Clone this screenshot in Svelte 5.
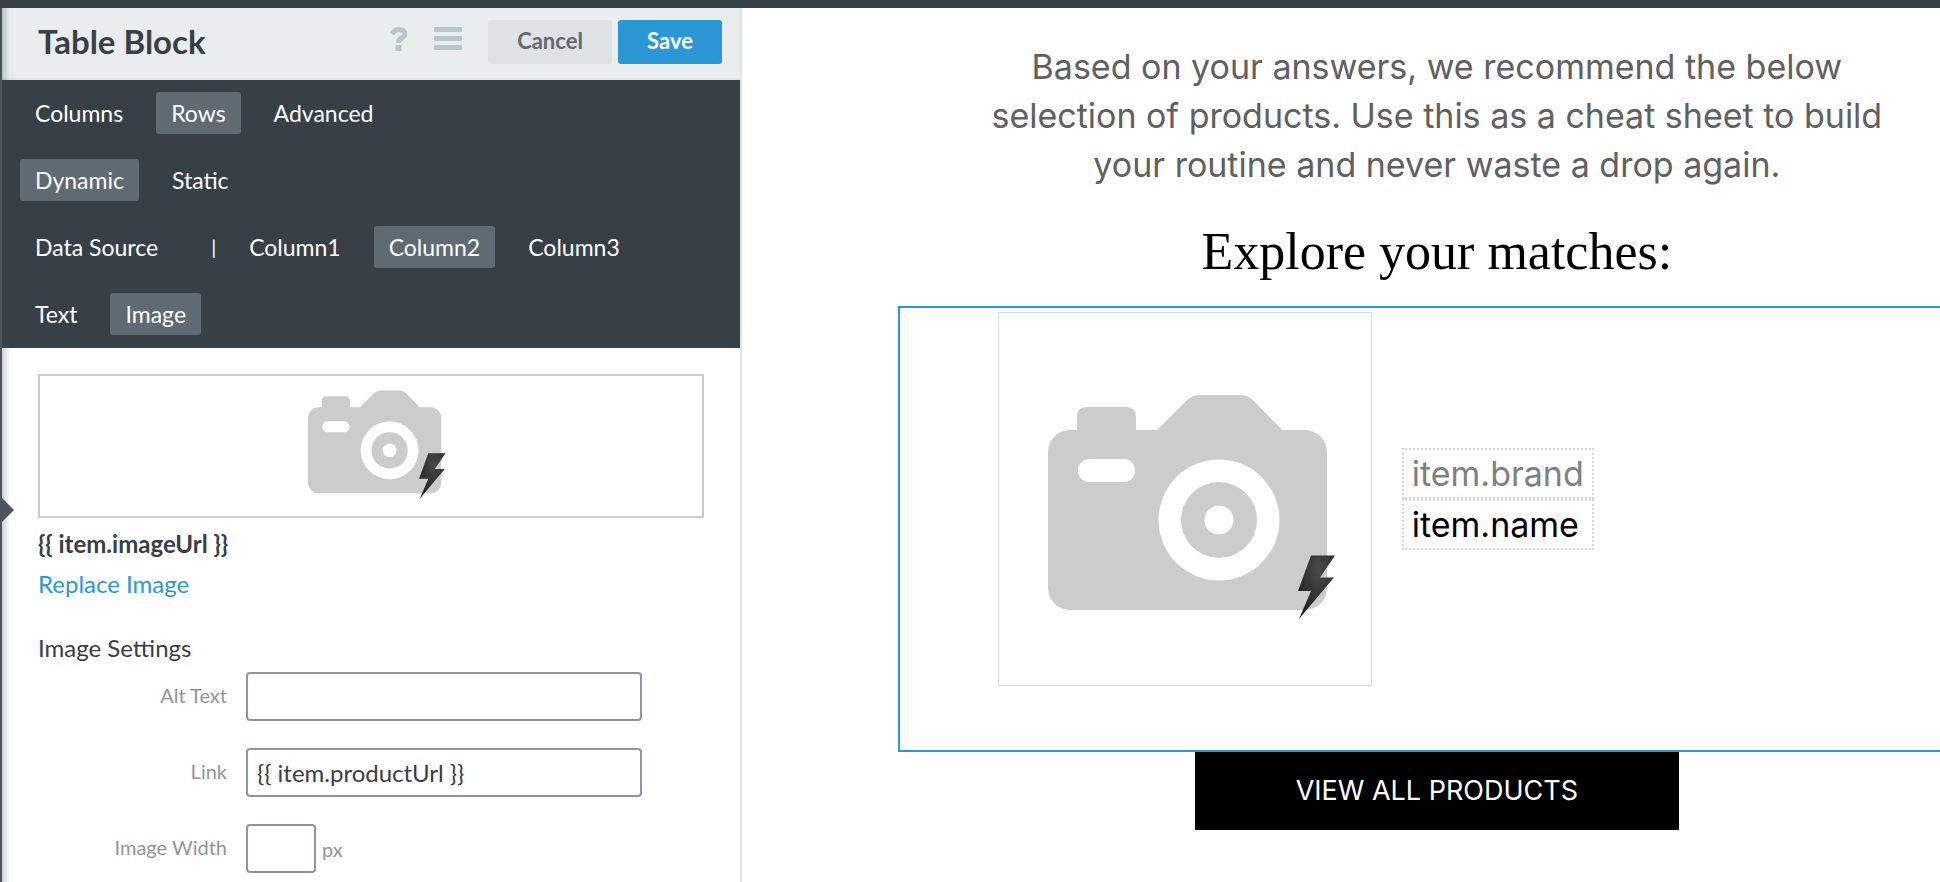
<script>
  let rows = $state([
    { name: 'section', tabs: ['Columns', 'Rows', 'Advanced'], active: 'Rows' },
    { name: 'mode', tabs: ['Dynamic', 'Static'], active: 'Dynamic' },
    { name: 'column', lead: 'Data Source', tabs: ['Column1', 'Column2', 'Column3'], active: 'Column2' },
    { name: 'content', tabs: ['Text', 'Image'], active: 'Image' }
  ]);

  let imageSource = '{{ item.imageUrl }}';
  let altText = $state('');
  let link = $state('{{ item.productUrl }}');
  let imageWidth = $state('');
</script>

{#snippet camera(viewBox, boltTransform, id)}
  <svg class="camera" {viewBox} aria-hidden="true">
    <defs>
      <radialGradient id={id} cx="0.55" cy="0.25" r="0.7">
        <stop offset="0" stop-color="#4a4a4a" />
        <stop offset="1" stop-color="#222" />
      </radialGradient>
    </defs>
    <path
      fill="#ccc"
      d="M72 117h7v-13q0-10 10-10h39q10 0 10 10v13h21l29-29q6-6 14-6h40q8 0 14 6l28 29h23a22 22 0 0 1 22 22v136a22 22 0 0 1-22 22H72a22 22 0 0 1-22-22V139a22 22 0 0 1 22-22z"
    />
    <rect x="80" y="146" width="57" height="23" rx="11" fill="#fff" />
    <circle cx="221" cy="207" r="60.5" fill="#fff" />
    <circle cx="221" cy="207" r="38" fill="#ccc" />
    <circle cx="221" cy="207" r="14.5" fill="#fff" />
    <path
      d="M313 242.500H337L322 264.500H336L301 306L313 278H300z"
      transform={boltTransform}
      fill="url(#{id})"
    />
  </svg>
{/snippet}

<div class="app">
  <aside class="panel">
    <header class="panel-header">
      <h1>Table Block</h1>
      <button class="icon-button" aria-label="Help">
        <svg width="18" height="24" viewBox="0 0 18 24">
          <path d="M2 7Q4.500 2.500 9 2.500Q14.800 2.500 14.800 7Q14.800 9.500 11.500 11.300Q8.300 13 8.300 16" fill="none" stroke="#bac4cb" stroke-width="5" />
          <rect x="5.500" y="18" width="6" height="6" fill="#bac4cb" />
        </svg>
      </button>
      <button class="icon-button" aria-label="Menu">
        <svg width="28" height="24" viewBox="0 0 28 24" fill="#bac4cb">
          <rect y="0" width="28" height="5" rx="1" />
          <rect y="9" width="28" height="5" rx="1" />
          <rect y="18" width="28" height="5" rx="1" />
        </svg>
      </button>
      <div class="actions">
        <button class="cancel">Cancel</button>
        <button class="save">Save</button>
      </div>
    </header>

    <nav class="tabs">
      {#each rows as row (row.name)}
        <div class="tab-row">
          {#if row.lead}
            <button class="tab">{row.lead}</button>
            <span class="divider">|</span>
          {/if}
          {#each row.tabs as tab}
            <button class="tab" class:active={row.active === tab} onclick={() => (row.active = tab)}>{tab}</button>
          {/each}
        </div>
      {/each}
    </nav>

    <section class="settings">
      <div class="thumbnail">
        {@render camera('25 79 314 240', 'translate(-167.500 -150.700) scale(1.500)', 'bolt-small')}
      </div>
      <strong class="source">{imageSource}</strong>
      <a class="replace" href="#replace">Replace Image</a>

      <h2>Image Settings</h2>
      <div class="form">
        <label for="alt-text">Alt Text</label>
        <div class="field"><input id="alt-text" type="text" bind:value={altText} /></div>
        <label for="link">Link</label>
        <div class="field"><input id="link" type="text" bind:value={link} /></div>
        <label for="image-width">Image Width</label>
        <div class="field">
          <input id="image-width" class="short" type="text" bind:value={imageWidth} />
          <span class="unit">px</span>
        </div>
      </div>
    </section>
    <span class="pointer"></span>
  </aside>

  <main class="preview">
    <div class="email">
      <p class="intro">
        Based on your answers, we recommend the below<br />
        selection of products. Use this as a cheat sheet to build<br />
        your routine and never waste a drop again.
      </p>
      <h2 class="matches">Explore your matches:</h2>
      <div class="table-block">
        <div class="item-image">
          {@render camera('1 0 372 372', undefined, 'bolt-large')}
        </div>
        <div class="item-text">
          <span class="token brand">item.brand</span>
          <span class="token">item.name</span>
        </div>
      </div>
      <a class="view-all" href="#products">VIEW ALL PRODUCTS</a>
    </div>
  </main>
</div>

<style>
  :global(body) {
    margin: 0;
    background: #fff;
  }

  .app {
    display: flex;
    box-sizing: border-box;
    height: 100vh;
    overflow: hidden;
    border-top: 8px solid #384047;
    font-family: Lato, sans-serif;
    color: #384047;
  }

  h1,
  h2,
  p {
    margin: 0;
  }

  button,
  input {
    font-family: inherit;
    color: inherit;
  }

  button {
    border: 0;
    padding: 0;
    background: none;
    cursor: pointer;
  }

  .panel {
    position: relative;
    flex: none;
    box-sizing: border-box;
    width: 742px;
    border-left: 2px solid #4d555b;
    border-right: 2px solid #dfe3e6;
  }

  /* soft shade along the inner left edge */
  .panel::before {
    content: '';
    position: absolute;
    top: 0;
    bottom: 0;
    left: 0;
    width: 8px;
    background: linear-gradient(to right, rgba(56, 64, 71, 0.25), rgba(56, 64, 71, 0));
    pointer-events: none;
  }

  .pointer {
    position: absolute;
    top: 490px;
    left: 0;
    border: 12px solid transparent;
    border-left-color: #4d555b;
    border-right: 0;
  }

  .panel-header {
    display: flex;
    align-items: flex-start;
    box-sizing: border-box;
    height: 72px;
    padding: 12px 18px 0 36px;
    background: #e9edee;
    border-bottom: 2px solid #dfe3e6;
  }

  h1 {
    flex: 1;
    font-size: 33px;
    line-height: 42px;
    font-weight: 700;
  }

  .icon-button {
    display: flex;
    padding: 7px 0;
    margin-right: 26px;
  }

  .actions {
    display: flex;
    gap: 6px;
  }

  .actions button {
    height: 44px;
    padding-bottom: 3px;
    border-radius: 3px;
    font-size: 22px;
    font-weight: 700;
  }

  .actions .cancel {
    width: 124px;
    background: #dee2e5;
    color: #606a72;
  }

  .actions .save {
    width: 104px;
    background: #2b98d5;
    color: #fff;
  }

  .tabs {
    display: flex;
    flex-direction: column;
    gap: 25px;
    padding: 12px 18px 13px;
    background: #384047;
    color: #fff;
  }

  .tab-row {
    display: flex;
    align-items: center;
    gap: 18px;
  }

  .tab {
    height: 42px;
    padding: 0 15px;
    border-radius: 3px;
    font-size: 23px;
  }

  .tab.active {
    background: #606a72;
  }

  .divider {
    padding-left: 20px;
    font-size: 20px;
  }

  .settings {
    display: flex;
    flex-direction: column;
    align-items: flex-start;
    padding: 26px 36px;
    font-size: 24px;
    line-height: 40px;
  }

  .thumbnail {
    display: flex;
    align-items: center;
    justify-content: center;
    align-self: stretch;
    height: 140px;
    margin-bottom: 6px;
    border: 2px solid #ccc;
  }

  .thumbnail .camera {
    width: 150px;
    height: 115px;
  }

  .source {
    font-weight: 700;
  }

  .replace {
    color: #2b98d5;
    text-decoration: none;
  }

  h2 {
    font-size: 24px;
    font-weight: 400;
  }

  .settings h2 {
    margin: 24px 0 4px;
  }

  .form {
    display: grid;
    grid-template-columns: 189px 396px;
    gap: 27px 19px;
    align-items: center;
  }

  .form label,
  .unit {
    font-size: 20px;
    line-height: 24px;
    color: #8f959e;
  }

  .form label {
    padding-bottom: 4px;
    text-align: right;
  }

  .field {
    display: flex;
    align-items: center;
    gap: 6px;
  }

  .field input {
    box-sizing: border-box;
    width: 100%;
    height: 49px;
    padding: 0 9px;
    border: 2px solid #8f959e;
    border-radius: 4px;
    background: #fff;
    font-size: 24px;
  }

  .field .short {
    width: 70px;
  }

  .preview {
    flex: 1;
    min-width: 0;
    overflow: hidden;
    font-family: Inter, sans-serif;
  }

  .email {
    display: flex;
    flex-direction: column;
    align-items: center;
    width: 90%;
    margin-left: 13%;
    padding-top: 34px;
  }

  .intro {
    font-size: 34px;
    line-height: 49px;
    text-align: center;
    color: #606060;
    white-space: nowrap;
  }

  .matches {
    margin: 33px 0 24px;
    font-family: 'Liberation Serif', serif;
    font-size: 52px;
    line-height: 60px;
    color: #000;
  }

  .table-block {
    display: flex;
    align-self: stretch;
    gap: 30px;
    padding: 4px 98px 64px;
    border: 2px solid #2b98d5;
  }

  .item-image {
    width: 372px;
    height: 372px;
    border: 1px solid #ddd;
  }

  .item-image .camera {
    display: block;
    width: 100%;
    height: 100%;
  }

  .item-text {
    display: flex;
    flex-direction: column;
    align-self: center;
  }

  .token {
    padding: 0 8px;
    border: 2px dotted #d8d8d8;
    font-size: 34px;
    line-height: 47px;
    color: #000;
  }

  .brand {
    color: #808080;
  }

  .view-all {
    box-sizing: border-box;
    width: 484px;
    background: #000;
    color: #fff;
    font-size: 27px;
    line-height: 78px;
    text-align: center;
    text-decoration: none;
  }
</style>
